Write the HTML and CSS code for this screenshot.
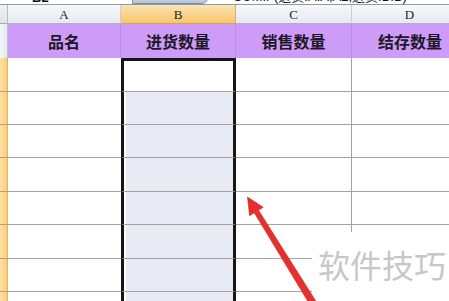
FILE: index.html
```html
<!DOCTYPE html>
<html lang="zh-CN">
<head>
    <meta charset="UTF-8">
    <meta name="viewport" content="width=device-width, initial-scale=1.0">
    <title>进货数量</title>
    <link rel="stylesheet" href="styles.css">
</head>
<body>
    <div class="sheet">
        <div class="formula-bar">
            <span class="name-box">B2</span>
            <span class="fx-button"></span>
            <span class="formula">=SUMIF(进货!A:A,A2,进货!B:B)</span>
        </div>

        <div class="grid">
            <!-- column headers -->
            <div class="corner"></div>
            <div class="col-head">A</div>
            <div class="col-head active">B</div>
            <div class="col-head">C</div>
            <div class="col-head">D</div>

            <!-- row 1: titles -->
            <div class="row-head plain"></div>
            <div class="title">品名</div>
            <div class="title">进货数量</div>
            <div class="title">销售数量</div>
            <div class="title last">结存数量</div>

            <!-- row 2 -->
            <div class="row-head"></div>
            <div class="cell col-a"></div>
            <div class="cell sel first"></div>
            <div class="cell col-c"></div>
            <div class="cell"></div>

            <div class="row-head"></div>
            <div class="cell col-a"></div>
            <div class="cell sel"></div>
            <div class="cell col-c"></div>
            <div class="cell"></div>

            <div class="row-head"></div>
            <div class="cell col-a"></div>
            <div class="cell sel"></div>
            <div class="cell col-c"></div>
            <div class="cell"></div>

            <div class="row-head"></div>
            <div class="cell col-a"></div>
            <div class="cell sel"></div>
            <div class="cell col-c"></div>
            <div class="cell"></div>

            <div class="row-head"></div>
            <div class="cell col-a"></div>
            <div class="cell sel"></div>
            <div class="cell col-c"></div>
            <div class="cell"></div>

            <div class="row-head"></div>
            <div class="cell col-a"></div>
            <div class="cell sel"></div>
            <div class="cell col-c"></div>
            <div class="cell"></div>

            <div class="row-head"></div>
            <div class="cell col-a"></div>
            <div class="cell sel"></div>
            <div class="cell col-c"></div>
            <div class="cell"></div>

            <div class="row-head"></div>
            <div class="cell col-a"></div>
            <div class="cell sel"></div>
            <div class="cell col-c"></div>
            <div class="cell"></div>
        </div>

        <!-- watermark and annotation arrow lie over the sheet -->
        <div class="watermark">软件技巧</div>
        <svg class="arrow" width="449" height="301" viewBox="0 0 449 301">
            <polygon points="247.5,197 263.2,207.3 258.5,210.2 318.8,305.8 312.8,309.4 254.3,212.8 249.6,215.7"
                     fill="#e5302b" stroke="#c9231f" stroke-width="0.6" stroke-linejoin="round"/>
        </svg>
    </div>
</body>
</html>
```

FILE: styles.css
```css
body {
    margin: 0;
    padding: 0;
    background: #ffffff;
    font-family: "Noto Sans CJK SC", "Noto Sans", sans-serif;
    overflow: hidden;
}

.sheet {
    position: relative;
    width: 449px;
    height: 301px;
    overflow: hidden;
}

/* formula bar, only its bottom edge is visible */
.formula-bar {
    display: flex;
    align-items: flex-end;
    height: 4px;
    overflow: hidden;
    border-bottom: 1px solid #8d9aab;
    background: #ffffff;
    font-family: "Liberation Sans", sans-serif;
    font-size: 13px;
    color: #111111;
}

.name-box {
    width: 132px;
    padding-left: 32px;
    box-sizing: border-box;
    line-height: 13px;
    font-weight: bold;
}

.fx-button {
    width: 76px;
    height: 16px;
    background: linear-gradient(#e9eef5, #b9c6d6);
    border: 1px solid #7f8fa3;
    border-radius: 0 0 6px 0;
    box-sizing: border-box;
}

.formula {
    margin-left: 18px;
    line-height: 14px;
    font-family: "Liberation Sans", "Noto Sans CJK SC", sans-serif;
    white-space: nowrap;
}

.grid {
    display: grid;
    grid-template-columns: 8px 113px 115px 116px 116px;
    grid-template-rows: 19px 34px 34px 33px 33px 34px 33px 34px 33px 33px;
}

/* column headers */
.corner {
    background: linear-gradient(#f1f4f8, #dde3ea);
    border-right: 1px solid #b3bcc8;
    border-bottom: 1px solid #9eabbb;
}

.col-head {
    display: flex;
    justify-content: center;
    align-items: flex-end;
    padding-bottom: 1px;
    background: linear-gradient(#f6f8fa, #e6eaf0);
    border-right: 1px solid #c9d0da;
    border-bottom: 1px solid #a9b4c2;
    font-family: "Liberation Serif", serif;
    font-size: 13px;
    line-height: 15px;
    color: #1f1f1f;
}

.col-head.active {
    background: linear-gradient(#fbe3b2, #f5c56c);
    border-right-color: #e0ae56;
    border-bottom-color: #d9a348;
}

/* row 1 titles */
.row-head {
    background: linear-gradient(90deg, #fde2a6, #f9cf7a);
    border-right: 1px solid #e2b45c;
    border-bottom: 1px solid #b89d70;
}

.row-head.plain {
    background: linear-gradient(90deg, #f4f6f9, #e3e8ee);
    border-right-color: #b7c0cc;
    border-bottom: none;
}

.title {
    display: flex;
    justify-content: center;
    align-items: center;
    padding-bottom: 1px;
    background: #cc9cf8;
    border-right: 1px solid #bd8cec;
    font-size: 16px;
    font-weight: bold;
    color: #1d1726;
}

.title.last {
    border-right: none;
}

/* body cells */
.cell {
    border-bottom: 1px solid #a2a2a2;
    background: #ffffff;
}

.col-c {
    border-right: 1px solid #a2a2a2;
}

.sel {
    border-left: 3px solid #161616;
    border-right: 3px solid #161616;
    background: #e8eaf4;
    box-shadow: inset 2px 0 #ffffff;
}

.sel.first {
    border-top: 3px solid #161616;
    background: #ffffff;
    box-shadow: none;
}

.watermark {
    position: absolute;
    left: 312px;
    top: 232px;
    width: 137px;
    height: 69px;
    padding: 12px 0 0 6px;
    box-sizing: border-box;
    background: #ffffff;
    font-size: 32px;
    line-height: 40px;
    color: #c7c7c7;
    white-space: nowrap;
}

.arrow {
    position: absolute;
    left: 0;
    top: 0;
    pointer-events: none;
}
```
